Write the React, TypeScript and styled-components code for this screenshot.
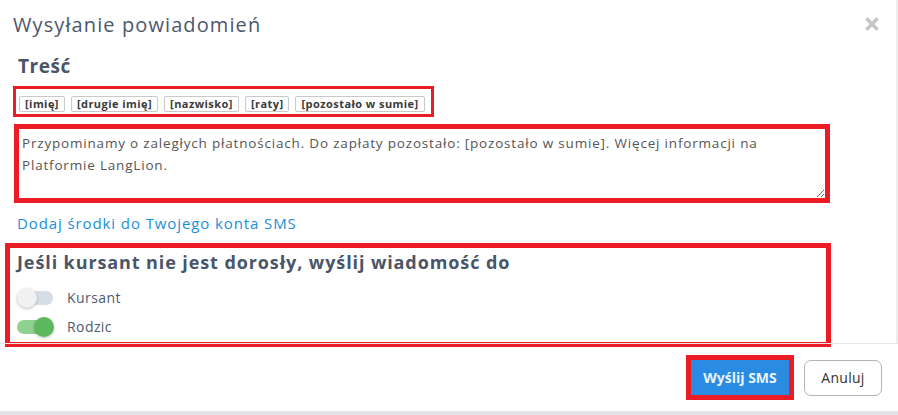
import React, { useState } from 'react';
import styled, { createGlobalStyle } from 'styled-components';

const GlobalStyle = createGlobalStyle`
    body {
        margin: 0;
        background: #e2e2e6;
        font-family: 'Open Sans', 'DejaVu Sans', sans-serif;
    }
`;

const tags = ['[imię]', '[drugie imię]', '[nazwisko]', '[raty]', '[pozostało w sumie]'];

const message =
    'Przypominamy o zaległych płatnościach. Do zapłaty pozostało: [pozostało w sumie]. Więcej informacji na Platformie LangLion.';

interface ToggleProps {
    on: boolean;
}

const Toggle: React.FunctionComponent<{ label: string; initial: boolean }> = ({ label, initial }) => {
    const [on, setOn] = useState(initial);

    return (
        <ToggleRow onClick={() => setOn(prev => !prev)}>
            <Track on={on}>
                <Knob on={on} />
            </Track>
            <ToggleLabel>{label}</ToggleLabel>
        </ToggleRow>
    );
};

const App: React.FunctionComponent = () => {
    return (
        <>
            <GlobalStyle />
            <Modal>
                <Body>
                    <Header>
                        <Title>Wysyłanie powiadomień</Title>
                        <Close aria-label="Zamknij">
                            <svg width="14" height="14" viewBox="0 0 14 14">
                                <path
                                    d="M2.5 2.5 L11.5 11.5 M11.5 2.5 L2.5 11.5"
                                    stroke="#c6c6c6"
                                    strokeWidth="3.6"
                                    strokeLinecap="round"
                                />
                            </svg>
                        </Close>
                    </Header>

                    <SectionTitle>Treść</SectionTitle>
                    <TagBar>
                        {tags.map(tag => (
                            <Tag key={tag}>{tag}</Tag>
                        ))}
                    </TagBar>

                    <MessageField defaultValue={message} />

                    <FundsLink href="#">Dodaj środki do Twojego konta SMS</FundsLink>

                    <Recipients>
                        <RecipientsTitle>Jeśli kursant nie jest dorosły, wyślij wiadomość do</RecipientsTitle>
                        <Toggle label="Kursant" initial={false} />
                        <Toggle label="Rodzic" initial={true} />
                    </Recipients>
                </Body>

                <Footer>
                    <PrimaryButton>Wyślij SMS</PrimaryButton>
                    <SecondaryButton>Anuluj</SecondaryButton>
                </Footer>
            </Modal>
        </>
    );
};

export default App;

const Modal = styled.div`
    width: 898px;
    height: 411px;
    background: #ffffff;
    display: flex;
    flex-direction: column;
`;

const Body = styled.div`
    height: 343px;
    flex-shrink: 0;
    box-sizing: border-box;
    border-right: 2px solid #ededed;
    display: flex;
    flex-direction: column;
    align-items: flex-start;
`;

const Header = styled.div`
    width: 100%;
    box-sizing: border-box;
    height: 48px;
    flex-shrink: 0;
    padding: 0 17px 0 13px;
    display: flex;
    justify-content: space-between;
    align-items: center;
`;

const Title = styled.h2`
    margin: 0;
    font-size: 20px;
    font-weight: 400;
    letter-spacing: 0.055em;
    color: #4d586b;
`;

const Close = styled.button`
    border: none;
    background: none;
    padding: 0;
    display: flex;
    cursor: pointer;
`;

const SectionTitle = styled.h3`
    margin: 6px 0 0 18px;
    font-size: 19px;
    line-height: 24px;
    font-weight: 700;
    letter-spacing: 0.03em;
    color: #4a5568;
`;

const TagBar = styled.div`
    margin: 11px 0 0 16px;
    padding: 7px 6px 2px 3px;
    display: flex;
    gap: 6px;
    outline: 3px solid #ec1c24;
`;

const Tag = styled.span`
    height: 16px;
    box-sizing: border-box;
    padding: 0 5px;
    border: 1px solid #c9c9c9;
    border-radius: 2px;
    font-size: 11px;
    font-weight: 700;
    letter-spacing: 0.04em;
    line-height: 14px;
    color: #3a3a3a;
    white-space: nowrap;
`;

const MessageField = styled.textarea`
    margin: 15px 0 0 19px;
    width: 806px;
    height: 69px;
    flex-shrink: 0;
    box-sizing: border-box;
    padding: 3px 3px;
    border: none;
    outline: 5px solid #ec1c24;
    font-family: 'Open Sans', 'DejaVu Sans', sans-serif;
    font-size: 13.5px;
    letter-spacing: 0.06em;
    line-height: 22px;
    color: #555555;
    resize: vertical;
`;

const FundsLink = styled.a`
    margin: 15px 0 0 17px;
    font-size: 15px;
    line-height: 20px;
    letter-spacing: 0.06em;
    color: #1a8fd8;
    text-decoration: none;
`;

const Recipients = styled.div`
    margin: 15px 0 0 10px;
    width: 816px;
    height: 94px;
    flex-shrink: 0;
    box-sizing: border-box;
    padding: 2px 7px 0;
    outline: 5px solid #ec1c24;
`;

const RecipientsTitle = styled.h3`
    margin: 0 0 9px;
    font-size: 18px;
    line-height: 24px;
    font-weight: 700;
    letter-spacing: 0.05em;
    color: #4a5568;
`;

const ToggleRow = styled.div`
    height: 29px;
    display: flex;
    align-items: center;
    gap: 14px;
    cursor: pointer;
`;

const Track = styled.div<ToggleProps>`
    position: relative;
    width: 36px;
    height: 14px;
    border-radius: 7px;
    background: ${props => (props.on ? '#8fd18f' : '#d5dde6')};
`;

const Knob = styled.div<ToggleProps>`
    position: absolute;
    top: -3px;
    left: ${props => (props.on ? '17px' : '0')};
    width: 20px;
    height: 20px;
    border-radius: 50%;
    background: ${props => (props.on ? '#5cb85c' : '#f1f1f1')};
    box-shadow: 0 1px 3px rgba(0, 0, 0, 0.25);
`;

const ToggleLabel = styled.span`
    font-size: 14px;
    letter-spacing: 0.03em;
    color: #4f5a6d;
`;

const Footer = styled.div`
    flex: 1;
    border-top: 1px solid #e6e6e6;
    padding-right: 16px;
    display: flex;
    justify-content: flex-end;
    align-items: center;
    gap: 15px;
`;

const PrimaryButton = styled.button`
    width: 98px;
    height: 35px;
    border: none;
    background: #2a8be2;
    color: #eaf4ff;
    font-family: 'Open Sans', 'DejaVu Sans', sans-serif;
    font-size: 14px;
    font-weight: 700;
    outline: 5px solid #ec1c24;
    cursor: pointer;
`;

const SecondaryButton = styled.button`
    width: 78px;
    height: 36px;
    border: 1px solid #b0b5bb;
    border-radius: 7px;
    background: #ffffff;
    color: #333333;
    font-family: 'Open Sans', 'DejaVu Sans', sans-serif;
    font-size: 14px;
    font-weight: 500;
    letter-spacing: 0.02em;
    cursor: pointer;
`;
